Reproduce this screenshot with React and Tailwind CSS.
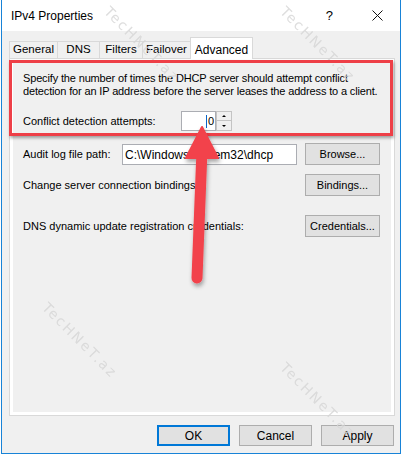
import React from 'react';

const Btn = ({ children, className = '' }) => (
  <button
    type="button"
    className={`h-[22px] w-[75px] border border-[#adadad] bg-[#e1e1e1] text-[11px] text-black ${className}`}
  >
    {children}
  </button>
);

const Mark = ({ className }) => (
  <span
    className={`pointer-events-none absolute rotate-45 whitespace-nowrap text-[14px] tracking-[2px] text-[#d6d6d6] opacity-80 ${className}`}
    style={{ fontFamily: '"DejaVu Sans", sans-serif' }}
  >
    TecHNeT.az
  </span>
);

export default function App() {
  const tabs = ['General', 'DNS', 'Filters', 'Failover'];
  const tabW = ['w-[48px]', 'w-[42px]', 'w-[43px]', 'w-[48px]'];

  return (
    <div
      className="relative h-[457px] w-[403px] overflow-hidden bg-white text-[11px] text-black"
      style={{ fontFamily: '"Liberation Sans", Arial, sans-serif' }}
    >
      <div className="ml-[1px] flex h-[454px] w-[400px] flex-col border-x border-b border-[#1883d7]">
        {/* title bar */}
        <div className="flex h-[31px] items-center bg-white pl-[9px]">
          <span className="text-[12px]">IPv4 Properties</span>
          <span className="ml-auto mr-[39px] text-[13px]">?</span>
          <svg width="11" height="11" viewBox="0 0 11 11" className="mr-[17px]">
            <path d="M0.5 0.5 L10.5 10.5 M10.5 0.5 L0.5 10.5" stroke="#111" strokeWidth="1" />
          </svg>
        </div>

        {/* body */}
        <div className="flex flex-1 flex-col bg-[#f0f0f0] pl-[7px] pr-[5px] pt-[6px]">
          {/* tabs */}
          <div className="flex h-[21px] items-end">
            {tabs.map((t, i) => (
              <div
                key={t}
                className={`flex h-[17px] items-center justify-center border-l border-t border-[#d9d9d9] bg-[#f0f0f0] text-[11.5px] ${tabW[i]}`}
              >
                {t}
              </div>
            ))}
            <div className="relative z-10 -mb-px flex h-[22px] w-[63px] items-start justify-center border-x border-t border-[#d9d9d9] bg-white pt-[3px] text-[12px]">
              Advanced
            </div>
          </div>

          {/* panel */}
          <div className="h-[358px] w-[386px] border border-[#d9d9d9] bg-white p-[3px]">
            <div className="h-full bg-[#f0f0f0] pl-[10px] pr-[11px] pt-[10px]">
              <p className="whitespace-nowrap leading-[13px] tracking-[-0.15px]">
                Specify the number of times the DHCP server should attempt conflict
                <br />
                detection for an IP address before the server leases the address to a client.
              </p>

              <div className="mt-[13px] flex items-center">
                <span className="w-[158px]">Conflict detection attempts:</span>
                <div className="flex h-[20px] w-[35px] items-center justify-end border border-[#abadb3] bg-white pr-[1px]">
                  <span className="border-l border-[#0a64c8] pl-[1px] leading-[13px]">0</span>
                </div>
                <div className="flex h-[20px] flex-col">
                  <div className="flex h-[10px] w-[16px] items-center justify-center border border-[#c4c4c4] bg-[#f0f0f0]">
                    <span className="h-0 w-0 border-x-[2px] border-b-[2px] border-x-transparent border-b-black" />
                  </div>
                  <div className="flex h-[10px] w-[16px] items-center justify-center border border-t-0 border-[#c4c4c4] bg-[#f0f0f0]">
                    <span className="h-0 w-0 border-x-[2px] border-t-[2px] border-x-transparent border-t-black" />
                  </div>
                </div>
              </div>

              <div className="mt-[12px] flex items-center">
                <span className="w-[99px]">Audit log file path:</span>
                <div className="flex h-[21px] w-[175px] items-start border border-[#abadb3] bg-white pl-[2px] pt-[1px] text-[12px]">
                  C:\Windows\system32\dhcp
                </div>
                <Btn className="ml-[8px]">Browse...</Btn>
              </div>

              <div className="mt-[9px] flex items-center justify-between">
                <span>Change server connection bindings:</span>
                <Btn>Bindings...</Btn>
              </div>

              <div className="mt-[19px] flex items-center justify-between">
                <span>DNS dynamic update registration credentials:</span>
                <Btn>Credentials...</Btn>
              </div>
            </div>
          </div>

          {/* dialog buttons */}
          <div className="mt-[9px] flex justify-end gap-[9px] pr-[1px]">
            <button
              type="button"
              className="h-[21px] w-[73px] border-2 border-[#0078d7] bg-[#e1e1e1] text-[12px]"
            >
              OK
            </button>
            <button
              type="button"
              className="h-[21px] w-[73px] border border-[#adadad] bg-[#e1e1e1] text-[12px]"
            >
              Cancel
            </button>
            <button
              type="button"
              className="h-[21px] w-[73px] border border-[#adadad] bg-[#e1e1e1] text-[12px]"
            >
              Apply
            </button>
          </div>
        </div>
      </div>

      {/* watermarks */}
      <Mark className="left-[92px] top-[34px]" />
      <Mark className="left-[268px] top-[34px]" />
      <Mark className="left-[30px] top-[330px]" />
      <Mark className="left-[268px] top-[390px]" />

      {/* red highlight box */}
      <div className="pointer-events-none absolute left-[9px] top-[60px] h-[76px] w-[384px] border-[3px] border-[#ee3f47] shadow-[1px_2px_3px_rgba(0,0,0,0.35)]" />

      {/* arrow */}
      <svg
        className="pointer-events-none absolute left-0 top-0"
        width="403"
        height="457"
        viewBox="0 0 403 457"
      >
        <defs>
          <filter id="sh" x="-50%" y="-50%" width="200%" height="200%">
            <feDropShadow dx="1" dy="3" stdDeviation="2" floodColor="#000" floodOpacity="0.35" />
          </filter>
        </defs>
        <g filter="url(#sh)" fill="#f2434b" stroke="#f2434b">
          <line x1="197" y1="278" x2="202" y2="150" strokeWidth="11" strokeLinecap="round" />
          <polygon points="202,127 218,158 186,158" strokeWidth="2" strokeLinejoin="round" />
        </g>
      </svg>
    </div>
  );
}
